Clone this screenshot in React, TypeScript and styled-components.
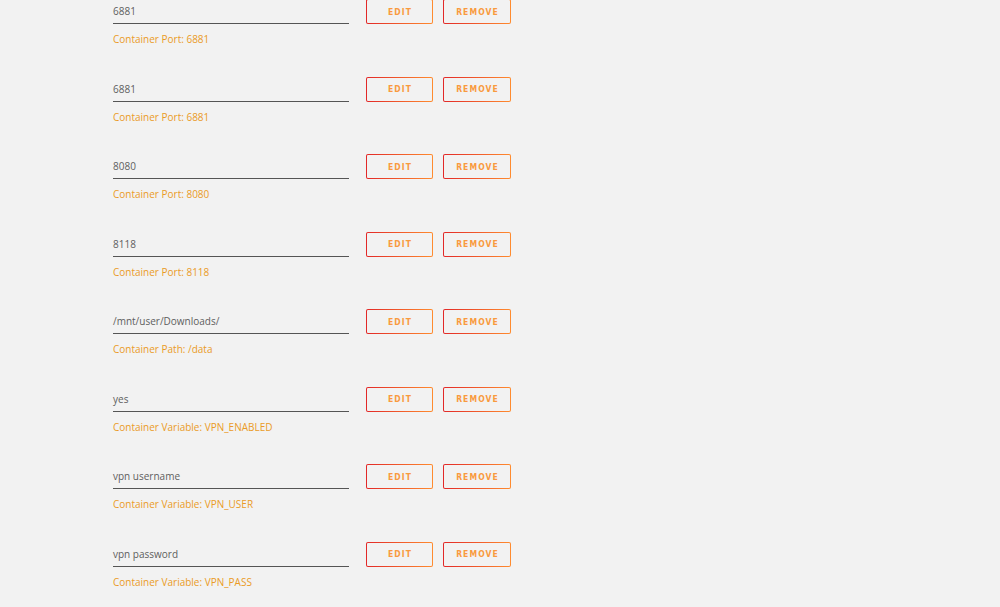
import styled, { createGlobalStyle } from 'styled-components'

const GlobalStyle = createGlobalStyle`
    html, body {
        margin: 0;
        padding: 0;
        background: #f2f2f2;
        overflow: hidden;
    }
    body {
        font-family: "Open Sans", "Liberation Sans", sans-serif;
    }
`;

const Page = styled.div`
    width: 1000px;
    height: 607px;
    padding-left: 113px;
    margin-top: -1px;
    box-sizing: border-box;
`;

const Row = styled.div`
    height: 77.5px;
    display: grid;
    grid-template-columns: 236px auto auto;
    grid-template-rows: 25px auto;
    column-gap: 17px;
    align-items: start;
`;

const Field = styled.div`
    width: 236px;
    height: 25px;
    box-sizing: border-box;
    border-bottom: 1px solid #555;
    display: flex;
    align-items: center;
    font-size: 10px;
    color: #5e5e5e;
`;

const Buttons = styled.div`
    display: flex;
    gap: 10px;
    grid-column: 2 / 4;
`;

const Button = styled.button<{ $w: number }>`
    width: ${p => p.$w}px;
    height: 25px;
    box-sizing: border-box;
    border: 1.5px solid transparent;
    border-radius: 2px;
    background:
        linear-gradient(#f2f2f2, #f2f2f2) padding-box,
        linear-gradient(90deg, #e22828, #ff8c2f) border-box;
    font-family: "DejaVu Sans Condensed", "DejaVu Sans", sans-serif;
    font-stretch: condensed;
    font-size: 8.5px;
    font-weight: bold;
    letter-spacing: 1.1px;
    text-transform: uppercase;
    color: #f99a3e;
    padding: 0 0 0 1px;
    cursor: pointer;
`;

const Hint = styled.div`
    grid-column: 1 / 4;
    margin-top: 8px;
    font-size: 10px;
    color: #ea9b26;
`;

const mappings = [
    { value: '6881', hint: 'Container Port: 6881' },
    { value: '6881', hint: 'Container Port: 6881' },
    { value: '8080', hint: 'Container Port: 8080' },
    { value: '8118', hint: 'Container Port: 8118' },
    { value: '/mnt/user/Downloads/', hint: 'Container Path: /data' },
    { value: 'yes', hint: 'Container Variable: VPN_ENABLED' },
    { value: 'vpn username', hint: 'Container Variable: VPN_USER' },
    { value: 'vpn password', hint: 'Container Variable: VPN_PASS' },
];

export default function App() {
    return (
        <Page>
            <GlobalStyle />
            {mappings.map((m, i) => (
                <Row key={i}>
                    <Field>{m.value}</Field>
                    <Buttons>
                        <Button $w={67}>Edit</Button>
                        <Button $w={68}>Remove</Button>
                    </Buttons>
                    <Hint>{m.hint}</Hint>
                </Row>
            ))}
        </Page>
    )
}
